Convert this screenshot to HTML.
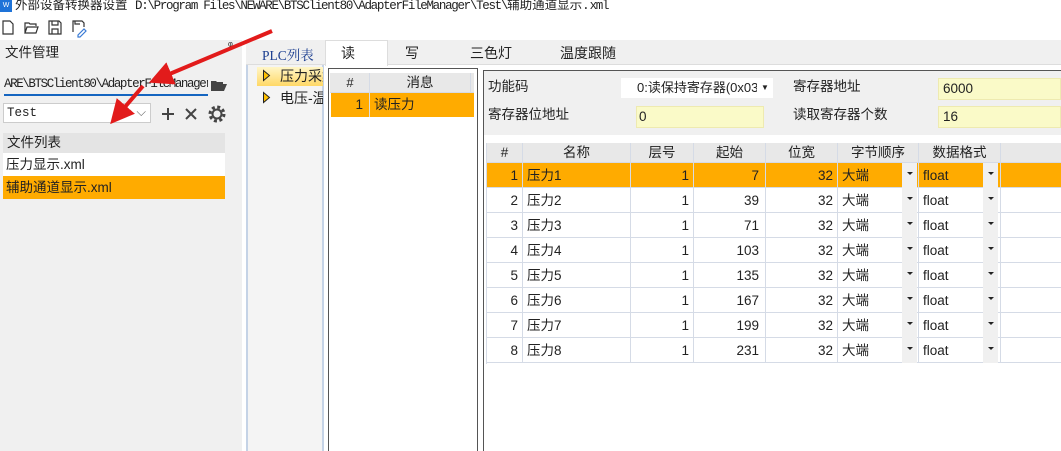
<!DOCTYPE html>
<html><head><meta charset="utf-8"><style>
*{margin:0;padding:0;box-sizing:border-box}
body{width:1061px;height:451px;overflow:hidden;background:#fff;font-family:"Liberation Sans","Noto Sans CJK SC",sans-serif;font-size:13px;color:#222;position:relative}
.a{position:absolute}
.mono{font-family:"Liberation Mono","Noto Sans CJK SC",monospace}
.row div{position:absolute;top:0;height:25px;line-height:25px;border-right:1px solid #d5dbe6;border-bottom:1px solid #d5dbe6;padding:0 4px;white-space:nowrap;overflow:hidden;font-size:13.5px}
.r{text-align:right}
.dd{position:absolute;top:2px;width:15px;height:20px;background:#f0f0f0;border:none!important;padding:0!important}
.dd:after{content:"";position:absolute;left:5px;top:9px;border-left:3px solid transparent;border-right:3px solid transparent;border-top:3px solid #222}
</style></head><body>
<div class="a" style="left:0;top:0;width:12px;height:12px;background:#1e73d8;color:#fff;font-size:7px;line-height:12px;text-align:center">W</div>
<div class="a mono" style="left:15px;top:0;font-size:12.5px;line-height:13px;white-space:nowrap">外部设备转换器设置 <span style="letter-spacing:-1.3px">D:\Program Files\NEWARE\BTSClient80\AdapterFileManager\Test\</span>辅助通道显示.<span style="letter-spacing:-1.3px">xml</span></div>
<svg class="a" style="left:0;top:18px" width="100" height="20" fill="none" stroke="#333" stroke-width="1.2">
<path d="M3 3h7l3 3v10H3z"/>
<path d="M25 15V5h4l1 1h6v2M25 15l2-6h11l-2 6z"/>
<path d="M49 3h10l2 2v11H49zM52 3v4h6V3M52 16v-5h6v5"/>
<path d="M73 14V3h9l2 2v4M75 3v3h5"/><path d="M78 17l6-6 2 2-6 6h-2z" stroke="#3a7bd5"/>
</svg>
<div class="a" style="left:0;top:40px;width:242px;height:411px;background:#f0f0f0"></div>
<div class="a" style="left:5px;top:41px;font-size:13.5px">文件管理</div>
<div class="a" style="left:228px;top:40px;font-size:11px">ᵠ</div>
<div class="a mono" style="left:4px;top:76px;width:204px;height:20px;line-height:17px;font-size:12.5px;letter-spacing:-1.4px;overflow:hidden;white-space:nowrap;border-bottom:2px solid #1565c0;background:#f0f0f0">ARE\BTSClient80\AdapterFileManager</div>
<svg class="a" style="left:210px;top:78px" width="18" height="14"><path d="M1 13V3h5l1 1h6v2H4l-3 7h13l3-7H4" fill="#444"/></svg>
<div class="a mono" style="left:3px;top:103px;width:148px;height:20px;background:#fff;border:1px solid #ccc;line-height:18px;padding-left:3px;font-size:12.5px">Test<span style="position:absolute;right:4px;top:0;color:#666">⌵</span></div>
<svg class="a" style="left:158px;top:104px" width="72" height="20" stroke="#444" stroke-width="2" fill="none">
<path d="M10 4v12M4 10h12"/><path d="M28 5l10 10M38 5L28 15"/>
<circle cx="59" cy="10" r="4.5"/><circle cx="59" cy="10" r="7" stroke-dasharray="3 2.5" stroke-width="3"/>
</svg>
<div class="a" style="left:3px;top:133px;width:222px;height:20px;background:#e4e4e4;line-height:20px;padding-left:4px;font-size:13.5px">文件列表</div>
<div class="a" style="left:3px;top:153px;width:222px;height:23px;background:#fff;line-height:23px;padding-left:3px;font-size:13.5px">压力显示.xml</div>
<div class="a" style="left:3px;top:176px;width:222px;height:23px;background:#ffab00;line-height:23px;padding-left:3px;font-size:13.5px">辅助通道显示.xml</div>
<div class="a" style="left:246px;top:40px;width:815px;height:25px;background:#f0f0f0;border-bottom:1px solid #ddd"></div>
<div class="a" style="left:262px;top:44px;color:#1a3d8f;font-size:13.5px;font-family:'Liberation Serif','Noto Serif CJK SC',serif">PLC列表</div>
<div class="a" style="left:325px;top:40px;width:63px;height:26px;background:#fff;border:1px solid #ddd;border-bottom:none;padding-left:15px;line-height:24px;font-size:14px">读</div>
<div class="a" style="left:405px;top:43px;font-size:14px">写</div>
<div class="a" style="left:470px;top:43px;font-size:14px">三色灯</div>
<div class="a" style="left:560px;top:43px;font-size:14px">温度跟随</div>
<div class="a" style="left:246px;top:65px;width:78px;height:386px;background:#f4f4f4;border-left:2px solid #c5d3e6;border-right:2px solid #c5d3e6"></div>
<div class="a" style="left:257px;top:67px;width:66px;height:19px;background:linear-gradient(#fff6c8,#ffd866);"></div>
<svg class="a" style="left:262px;top:69px" width="10" height="40"><path d="M1.5 1.5l6 5-6 5z" fill="#ffc000" stroke="#222"/><path d="M1.5 23.5l6 5-6 5z" fill="#ffc000" stroke="#222"/></svg>
<div class="a" style="left:280px;top:67px;font-size:14px;line-height:19px;width:43px;overflow:hidden;white-space:nowrap">压力采集</div>
<div class="a" style="left:280px;top:89px;font-size:14px;line-height:19px;width:43px;overflow:hidden;white-space:nowrap">电压-温度</div>
<div class="a" style="left:328px;top:68px;width:150px;height:383px;background:#fff;border:1px solid #555;border-bottom:none"></div>
<div class="a" style="left:330px;top:73px;width:144px;height:20px;background:#e8e8e8;border-bottom:1px solid #d5dbe6"></div>
<div class="a" style="left:331px;top:73px;width:39px;height:20px;border-right:1px solid #d5dbe6;text-align:center;line-height:20px">#</div>
<div class="a" style="left:370px;top:73px;width:101px;height:20px;border-right:1px solid #d5dbe6;text-align:center;line-height:20px;font-size:13.5px">消息</div>
<div class="a" style="left:331px;top:93px;width:143px;height:24px;background:#ffab00"></div>
<div class="a" style="left:331px;top:93px;width:39px;height:24px;border-right:1px solid #ddd;text-align:right;padding-right:6px;line-height:24px;font-size:13.5px">1</div>
<div class="a" style="left:374px;top:93px;line-height:24px;font-size:13.5px">读压力</div>
<div class="a" style="left:483px;top:70px;width:578px;height:381px;background:#fff;border-left:1px solid #555;border-top:1px solid #555"></div>
<div class="a" style="left:484px;top:71px;width:577px;height:64px;background:#f0f0f0"></div>
<div class="a" style="left:488px;top:77px;font-size:13.5px;line-height:20px">功能码</div>
<div class="a" style="left:621px;top:78px;width:152px;height:20px;background:#fff;font-size:13px;line-height:20px;padding-left:16px;white-space:nowrap;overflow:hidden">0:读保持寄存器(0x03<span style="position:absolute;right:0;top:0;width:16px;background:#fff;text-align:center;font-size:8px">▼</span></div>
<div class="a" style="left:793px;top:77px;font-size:13.5px;line-height:20px">寄存器地址</div>
<div class="a" style="left:938px;top:78px;width:123px;height:22px;background:#fafac8;border:1px solid #eeeab0;line-height:20px;padding-left:4px;font-size:13.5px">6000</div>
<div class="a" style="left:488px;top:105px;font-size:13.5px;line-height:20px">寄存器位地址</div>
<div class="a" style="left:636px;top:106px;width:128px;height:22px;background:#fafac8;border:1px solid #eeeab0;line-height:20px;padding-left:2px;font-size:13.5px">0</div>
<div class="a" style="left:793px;top:105px;font-size:13.5px;line-height:20px">读取寄存器个数</div>
<div class="a" style="left:938px;top:106px;width:123px;height:22px;background:#fafac8;border:1px solid #eeeab0;line-height:20px;padding-left:4px;font-size:13.5px">16</div>
<div class="a" style="left:486px;top:143px;width:575px;height:221px;border-left:1px solid #d5dbe6">
<div class="row a" style="left:0;top:0;width:575px;height:20px;background:#e8e8e8">
<div style="left:0;width:36px;height:20px;line-height:20px;text-align:center">#</div>
<div style="left:36px;width:108px;height:20px;line-height:20px;text-align:center">名称</div>
<div style="left:144px;width:63px;height:20px;line-height:20px;text-align:center">层号</div>
<div style="left:207px;width:72px;height:20px;line-height:20px;text-align:center">起始</div>
<div style="left:279px;width:72px;height:20px;line-height:20px;text-align:center">位宽</div>
<div style="left:351px;width:81px;height:20px;line-height:20px;text-align:center">字节顺序</div>
<div style="left:432px;width:82px;height:20px;line-height:20px;text-align:center">数据格式</div>
<div style="left:514px;width:61px;height:20px"></div>
</div>
</div>
<div id="rows"></div>
<script>
var s=[7,39,71,103,135,167,199,231],h='';
for(var i=0;i<8;i++){var t=163+i*25,bg=i==0?'#ffab00':'#fff';
h+='<div class="row a" style="left:486px;top:'+t+'px;width:575px;height:25px;background:'+bg+';border-left:1px solid #d5dbe6">'+
'<div class="r" style="left:0;width:36px">'+(i+1)+'</div>'+
'<div style="left:36px;width:108px">压力'+(i+1)+'</div>'+
'<div class="r" style="left:144px;width:63px">1</div>'+
'<div class="r" style="left:207px;width:72px;padding-right:6px">'+s[i]+'</div>'+
'<div class="r" style="left:279px;width:72px">32</div>'+
'<div style="left:351px;width:81px">大端</div>'+
'<div class="dd" style="left:415px"></div>'+
'<div style="left:432px;width:82px">float</div>'+
'<div class="dd" style="left:496px"></div>'+
'<div style="left:514px;width:61px"></div></div>';}
document.getElementById('rows').innerHTML=h;
</script>
<svg class="a" style="left:0;top:0" width="300" height="140">
<defs><marker id="m" markerWidth="6" markerHeight="6" refX="3" refY="3" orient="auto" markerUnits="strokeWidth"><path d="M0 0L6 3L0 6z" fill="#e21b1b"/></marker></defs>
<path d="M272 31L160 78" stroke="#e21b1b" stroke-width="4" marker-end="url(#m)"/>
<path d="M143 86L118 115" stroke="#e21b1b" stroke-width="4" marker-end="url(#m)"/>
</svg>
</body></html>
